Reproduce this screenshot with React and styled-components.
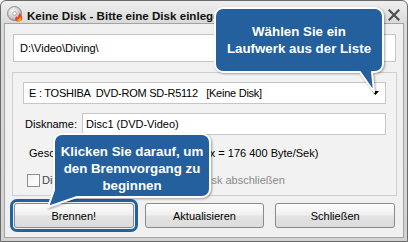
import React from "react";
import styled, { createGlobalStyle } from "styled-components";

const Global = createGlobalStyle`
  html, body { margin: 0; padding: 0; background: #ffffff; }
  body { font-family: "Liberation Sans", Arial, sans-serif; font-size: 11px; color: #000; }
  * { box-sizing: border-box; }
`;

const Window = styled.div`
  position: relative;
  width: 408px;
  height: 242px;
  border: 1px solid #6a6a6a;
  border-radius: 6px 6px 0 0;
  background: linear-gradient(#efefef, #dadada 22px, #d2d2d2);
  display: flex;
  flex-direction: column;
  overflow: hidden;
`;

const TitleBar = styled.div`
  height: 22px;
  flex: none;
  display: flex;
  align-items: center;
  gap: 4px;
  padding: 4px 7px 0 6px;
`;

const TitleText = styled.div`
  font-weight: bold;
  font-size: 11.6px;
  color: #111;
  margin-top: 2px;
  white-space: nowrap;
`;

const CloseBox = styled.div`
  margin-left: auto;
  width: 12px;
  height: 12px;
  margin-top: 2px;
  display: flex;
`;

const Client = styled.div`
  flex: 1;
  margin: 0 3px 3px;
  border: 1px solid #a3a3a3;
  background: #f0f0f0;
  padding: 10px 7px 8px 8px;
  display: flex;
  flex-direction: column;
`;

const Field = styled.div`
  height: ${(p) => p.$h || 22}px;
  border: 1px solid #c6c6c6;
  background: #ffffff;
  display: flex;
  align-items: center;
  padding: 0 ${(p) => p.$pr || 4}px 0 ${(p) => p.$pl || 4}px;
  white-space: pre;
  flex: ${(p) => (p.$grow ? 1 : "none")};
`;

const Panel = styled.div`
  margin: 10px -1px 0;
  height: 124px;
  border: 1px solid #cfcfcf;
  background: #f2f2f2;
  padding: 9px 10px 0;
  display: flex;
  flex-direction: column;
`;

const ComboText = styled.span`
  flex: 1;
  white-space: pre;
  letter-spacing: -0.25px;
`;

const Row = styled.div`
  display: flex;
  align-items: center;
  margin-top: 9px;
  height: ${(p) => p.$h || 18}px;
  padding-left: ${(p) => p.$pl || 0}px;
  white-space: pre;
`;

const Label = styled.span`
  width: ${(p) => p.$w}px;
  flex: none;
  padding-left: ${(p) => p.$pl || 0}px;
  color: ${(p) => p.$c || "#000"};
  overflow: hidden;
`;

const CheckBox = styled.span`
  width: 13px;
  height: 13px;
  flex: none;
  border: 1px solid #8e8f8f;
  background: linear-gradient(135deg, #f2f2f2, #ffffff);
  margin-right: 2px;
`;

const ButtonRow = styled.div`
  margin-top: 7px;
  display: flex;
  gap: 11px;
  padding: 0 1px;
`;

const Button = styled.div`
  flex: 1;
  height: 25px;
  border: 1px solid #8a8a8a;
  border-radius: 3px;
  background: linear-gradient(#fdfdfd, #f0f0f0 45%, #e2e2e2 55%, #dcdcdc);
  display: flex;
  align-items: center;
  justify-content: center;
  outline: ${(p) => (p.$marked ? "3px solid #2262a1" : "none")};
  outline-offset: 1px;
`;

const Callout = styled.div`
  position: absolute;
  left: ${(p) => p.$x}px;
  top: ${(p) => p.$y}px;
  width: ${(p) => p.$w}px;
  height: ${(p) => p.$h}px;
`;

const CalloutShape = styled.svg`
  position: absolute;
  left: 0;
  top: 0;
  overflow: visible;
  filter: drop-shadow(1px 1px 1px rgba(0, 0, 0, 0.35));
`;

const CalloutText = styled.div`
  position: absolute;
  inset: 0;
  display: flex;
  align-items: center;
  justify-content: center;
  text-align: center;
  padding-top: ${(p) => p.$pt || 0}px;
  color: #ffffff;
  font-weight: bold;
  font-size: 13.3px;
  line-height: 17px;
`;

const DiscIcon = () => (
  <svg width="16" height="16" viewBox="0 0 16 16">
    <defs>
      <radialGradient id="cdg" cx="0.4" cy="0.35" r="0.75">
        <stop offset="0" stopColor="#ffffff" />
        <stop offset="0.55" stopColor="#cfcfcf" />
        <stop offset="1" stopColor="#8a8a8a" />
      </radialGradient>
    </defs>
    <circle cx="7.5" cy="7.5" r="7" fill="url(#cdg)" stroke="#7d7d7d" strokeWidth="0.8" />
    <circle cx="7.5" cy="7.5" r="2" fill="#f2f2f2" stroke="#8a8a8a" strokeWidth="0.6" />
    <path
      d="M10.5 15.6 C7.8 15.3 7.6 12 9.8 10 C9.8 11.4 10.6 11.8 11.1 11.3 C11 9.4 12.4 8 12.9 6.8 C13.6 8.8 15.6 10.2 15.2 12.8 C14.9 14.6 13.2 15.8 10.5 15.6 Z"
      fill="#e8431a"
    />
    <path
      d="M11.2 15.2 C10 14.8 10 13.4 11.2 12.4 C11.4 13.2 12 13.3 12.3 12.8 C12.5 11.8 13.2 11 13.4 10.4 C14.2 11.8 14.6 13.2 13.8 14.4 C13.2 15.1 12.3 15.4 11.2 15.2 Z"
      fill="#f7a21b"
    />
  </svg>
);

const CloseIcon = () => (
  <svg width="12" height="12" viewBox="0 0 12 12">
    <path d="M1.5 1.5 L10.5 10.5 M10.5 1.5 L1.5 10.5" stroke="#4f4f4f" strokeWidth="2.2" strokeLinecap="square" />
  </svg>
);

const Arrow = () => (
  <svg width="7" height="4" viewBox="0 0 7 4">
    <path d="M0 0 H7 L3.5 4 Z" fill="#000" />
  </svg>
);

const BLUE = "#24609d";

export default function App() {
  return (
    <>
      <Global />
      <Window>
        <TitleBar>
          <DiscIcon />
          <TitleText>Keine Disk - Bitte eine Disk einlegen</TitleText>
          <CloseBox>
            <CloseIcon />
          </CloseBox>
        </TitleBar>
        <Client>
          <Field $h={28} $pl={6}>D:\Video\Diving\</Field>
          <Panel>
            <Field $pl={5} $pr={6}>
              <ComboText>{"E : TOSHIBA  DVD-ROM SD-R5112   [Keine Disk]"}</ComboText>
              <Arrow />
            </Field>
            <Row $h={22}>
              <Label $w={59} $pl={2}>Diskname:</Label>
              <Field $grow $pl={3}>Disc1 (DVD-Video)</Field>
            </Row>
            <Row $pl={6}>
              <Label $w={127}>Geschwindigkeit:</Label>
              <span>{"Maximal (1x = 176 400 Byte/Sek)"}</span>
            </Row>
            <Row $pl={4}>
              <CheckBox />
              <Label $w={159} $c="#444">Disk nach dem Brennen</Label>
              <Label $c="#8a8a8a">Disk abschließen</Label>
            </Row>
          </Panel>
          <ButtonRow>
            <Button $marked>Brennen!</Button>
            <Button>Aktualisieren</Button>
            <Button>Schließen</Button>
          </ButtonRow>
        </Client>

        <Callout $x={213} $y={6} $w={170} $h={66}>
          <CalloutShape width="170" height="66">
            <path
              d="M8 1 H161 A8 8 0 0 1 169 9 V57 A8 8 0 0 1 161 65 H158 L160 85 L146 65 H9 A8 8 0 0 1 1 57 V9 A8 8 0 0 1 9 1 Z"
              fill={BLUE}
              stroke="#ffffff"
              strokeWidth="2"
              strokeLinejoin="round"
            />
          </CalloutShape>
          <CalloutText>
            Wählen Sie ein
            <br />
            Laufwerk aus der Liste
          </CalloutText>
        </Callout>

        <Callout $x={52} $y={132} $w={158} $h={65}>
          <CalloutShape width="158" height="65">
            <path
              d="M9 1 H149 A8 8 0 0 1 157 9 V56 A8 8 0 0 1 149 64 H24 L-5 74 L1 57 V9 A8 8 0 0 1 9 1 Z"
              fill={BLUE}
              stroke="#ffffff"
              strokeWidth="2"
              strokeLinejoin="round"
            />
          </CalloutShape>
          <CalloutText $pt={6}>
            Klicken Sie darauf, um
            <br />
            den Brennvorgang zu
            <br />
            beginnen
          </CalloutText>
        </Callout>
      </Window>
    </>
  );
}
